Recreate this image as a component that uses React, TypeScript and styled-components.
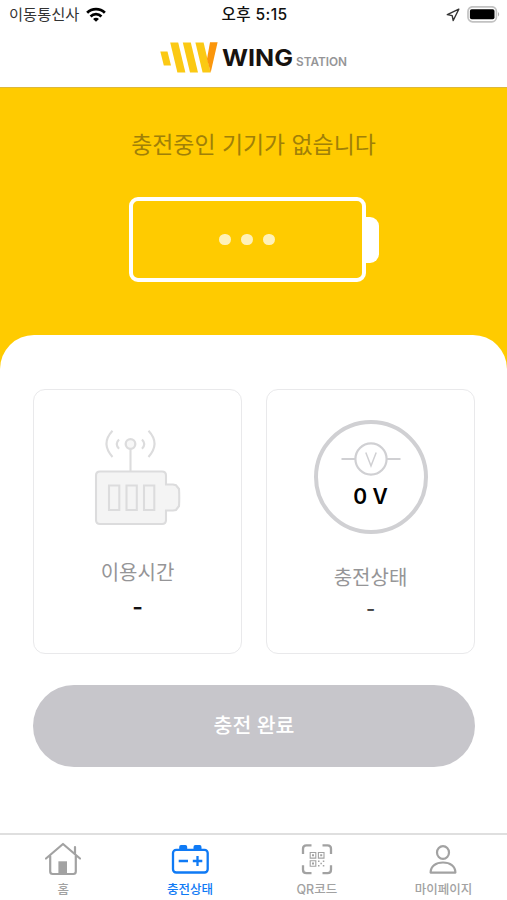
import React from "react";
import styled, { createGlobalStyle } from "styled-components";

const GlobalStyle = createGlobalStyle`
  * { box-sizing: border-box; }
  body {
    margin: 0;
    background: #fff;
    font-family: Inter, "Noto Sans CJK KR", sans-serif;
  }
  svg { display: block; flex: none; }
`;

const Screen = styled.div`
  width: 507px;
  height: 900px;
  display: flex;
  flex-direction: column;
  overflow: hidden;
  background: #fff;
`;

const StatusBar = styled.div`
  height: 30px;
  flex: none;
  display: grid;
  grid-template-columns: 1fr auto 1fr;
  align-items: center;
  padding: 0 7px 0 9px;
  font-size: 15.3px;
  line-height: 30px;
  color: #333;
`;

const Carrier = styled.div`
  display: flex;
  align-items: center;
  gap: 6.5px;
  font-weight: 400;
`;

const Clock = styled.div`
  font-size: 15.6px;
  letter-spacing: 0.4px;
  font-weight: 500;
  color: #111;
`;

const Indicators = styled.div`
  display: flex;
  align-items: center;
  justify-content: flex-end;
  gap: 7px;
`;

const Header = styled.header`
  height: 58px;
  flex: none;
  display: flex;
  align-items: flex-start;
  padding: 12px 0 0 160px;
  border-bottom: 1px solid #dcb83c;
`;

const BrandName = styled.span`
  width: 70px;
  margin: 3px 0 0 4px;
  font-size: 23px;
  line-height: 26px;
  font-weight: 700;
  color: #17120f;
  transform: scaleX(1.09);
  transform-origin: left;
`;

const BrandSuffix = styled.span`
  margin: 12px 0 0 4px;
  font-size: 11.8px;
  line-height: 16px;
  font-weight: 600;
  color: #959597;
`;

const Hero = styled.section`
  height: 283px;
  flex: none;
  display: flex;
  flex-direction: column;
  align-items: center;
  background: #ffcb00;
`;

const HeroTitle = styled.h1`
  margin: 40px 0 0;
  font-size: 22.9px;
  line-height: 34px;
  font-weight: 400;
  color: #a08008;
`;

const BatteryRow = styled.div`
  display: flex;
  align-items: center;
  margin-top: 35px;
`;

const BatteryBody = styled.div`
  width: 237px;
  height: 85px;
  display: flex;
  align-items: center;
  justify-content: center;
  gap: 10.5px;
  border: 4px solid #fff;
  border-radius: 9px;
`;

const BatteryTip = styled.div`
  width: 13px;
  height: 46px;
  border-radius: 0 9px 9px 0;
  background: #fff;
`;

const Dot = styled.i`
  width: 11.5px;
  height: 11.5px;
  border-radius: 50%;
  background: #fff1b8;
`;

const Sheet = styled.main`
  flex: 1;
  margin-top: -36px;
  padding: 54px 32px 0 33px;
  border-radius: 34px 34px 0 0;
  background: #fff;
`;

const Cards = styled.div`
  display: grid;
  grid-template-columns: 1fr 1fr;
  column-gap: 24px;
`;

const Card = styled.article<{ $top: number }>`
  height: 265px;
  display: flex;
  flex-direction: column;
  align-items: center;
  padding-top: ${(p) => p.$top}px;
  border: 1.5px solid #e9e9eb;
  border-radius: 12px;
`;

const CardLabel = styled.div<{ $gap: number }>`
  margin-top: ${(p) => p.$gap}px;
  font-size: 20px;
  line-height: 28px;
  font-weight: 400;
  color: #959597;
`;

const CardValue = styled.div<{ $strong?: boolean }>`
  margin-top: ${(p) => (p.$strong ? 6 : 3)}px;
  font-size: ${(p) => (p.$strong ? 23 : 20)}px;
  line-height: 28px;
  font-weight: ${(p) => (p.$strong ? 600 : 500)};
  color: ${(p) => (p.$strong ? "#111" : "#444")};
`;

const Gauge = styled.div`
  width: 114px;
  height: 114px;
  display: flex;
  flex-direction: column;
  align-items: center;
  padding-top: 18px;
  border: 4px solid #d0d0d3;
  border-radius: 50%;
`;

const Voltage = styled.div`
  margin-top: 7px;
  font-size: 21px;
  line-height: 28px;
  font-weight: 600;
  color: #000;
`;

const CompleteButton = styled.button`
  display: block;
  width: 100%;
  height: 82px;
  margin-top: 31px;
  padding: 0;
  border: 0;
  border-radius: 41px;
  background: #c7c6cb;
  color: #fff;
  font: 500 20.5px/82px Inter, "Noto Sans CJK KR", sans-serif;
`;

const TabBar = styled.nav`
  height: 67px;
  flex: none;
  display: grid;
  grid-template-columns: repeat(4, 1fr);
  border-top: 2px solid #dfdfdf;
`;

const Tab = styled.a<{ $active?: boolean }>`
  display: flex;
  flex-direction: column;
  align-items: center;
  padding-top: 6px;
  gap: 4px;
  font-size: 12.5px;
  line-height: 18px;
  font-weight: 500;
  color: ${(p) => (p.$active ? "#0f7af5" : "#a2a2a2")};
`;

const WifiIcon = () => (
  <svg width="20" height="16" viewBox="0 0 21 16" fill="none" stroke="#000" strokeWidth="2.9">
    <path d="M1.2 5.7C6.3.7 14.7.7 19.8 5.7" />
    <path d="M4.8 9.5C8 6.4 13 6.4 16.2 9.5" />
    <path d="M10.5 15.2 7.4 12.1C9.2 10.6 11.8 10.6 13.6 12.1Z" fill="#000" stroke="none" />
  </svg>
);

const LocationIcon = () => (
  <svg width="14" height="14" viewBox="0 0 14 14" fill="none" stroke="#333" strokeWidth="1.4" strokeLinejoin="round">
    <path d="M12.8 1.2 1.3 6.6 6.2 7.6 7.2 12.5Z" />
  </svg>
);

const PhoneBatteryIcon = () => (
  <svg width="33" height="18" viewBox="0 0 33 18">
    <rect x="1" y=".8" width="28.4" height="15" rx="4.6" fill="#fff" stroke="#c2c2c2" strokeWidth="1.7" />
    <rect x="2.9" y="3.3" width="24.6" height="10" rx="1.8" fill="#000" />
    <path d="M31 6.1C32.6 6.9 32.6 9.7 31 10.5Z" fill="#b0b0b0" />
  </svg>
);

const LogoMark = () => (
  <svg width="58" height="31" viewBox="0 0 58 31" strokeLinejoin="round">
    <g fill="#fbc914">
      <path d="M.3 9.4H7.5L11 23.4H3.8Z" />
      <path d="M10.2.5H18.2L25.4 30.6H17.4Z" />
      <path d="M22.8.5H30.8L38 30.6H30Z" />
      <path d="M35.4.5H43.6L50.6 30.6H42.6Z" />
    </g>
    <path d="M50 .3H57.6L50.7 30.4 47 17Z" fill="#fb960c" />
  </svg>
);

const WirelessBatteryIcon = () => (
  <svg width="88" height="96" viewBox="0 0 88 96" fill="none" stroke="#dcdcdd" strokeWidth="2.1">
    <path d="M6 41.5H68Q72 41.5 72 45.5V54.5H79L82 55.3 85 59Q85.5 67.5 85 76L82 80 79 80.5H72V90Q72 94 68 94H6Q2 94 2 90V45.5Q2 41.5 6 41.5Z" fill="#f4f4f4" />
    <path d="M36.5 18.8V41.5" />
    <circle cx="36.5" cy="14" r="4.8" fill="#f7f7f7" strokeWidth="2.3" />
    <path d="M18.5.8Q6.5 13.5 18.5 27M54.5.8Q66.5 13.5 54.5 27" />
    <path d="M25 9.5Q20.5 14 25 18.7M48 9.5Q52.5 14 48 18.7" />
    <path d="M15 55.5H25.3V80H15ZM32.5 55.5H42.8V80H32.5ZM50 55.5H60.3V80H50Z" />
  </svg>
);

const VoltmeterIcon = () => (
  <svg width="60" height="34" viewBox="0 0 60 34" fill="none" stroke="#d0d0d3" strokeWidth="2.2">
    <circle cx="30" cy="17" r="15.6" />
    <path d="M.5 17H14.3M45.7 17H59.5" />
    <path d="M24.8 10.5 30 24 35.2 10.5" strokeWidth="1.5" />
  </svg>
);

const HomeIcon = () => (
  <svg width="36" height="36" viewBox="1 0 36 36" fill="none" stroke="currentColor" strokeWidth="2.2" strokeLinecap="round" strokeLinejoin="round">
    <path d="M2 17.5 19 3 36 17.5M6.2 15V30.5Q6.2 33 8.7 33H29.3Q31.8 33 31.8 30.5V15M31 12.5V6" />
    <path d="M14.4 32.5V20.3H23V32.5Z" fill="currentColor" stroke="none" />
  </svg>
);

const CarBatteryIcon = () => (
  <svg width="38" height="36" viewBox="0 0 38 36" fill="none" stroke="currentColor" strokeWidth="2.3">
    <rect x="2" y="8.8" width="34.7" height="22.7" rx="3.2" />
    <path d="M8.2 9V6Q8.2 4.1 10 4.1H14.4Q16.2 4.1 16.2 6V9ZM22.5 9V6Q22.5 4.1 24.3 4.1H28.7Q30.5 4.1 30.5 6V9Z" fill="currentColor" stroke="none" />
    <path d="M7.7 20H17M21.8 20H31.3M26.5 15V25" />
  </svg>
);

const QrIcon = () => (
  <svg width="32" height="36" viewBox="0 0 32 36" fill="none" stroke="currentColor">
    <path d="M2 13V7.8Q2 4.3 5.5 4.3H10.5M21.5 4.3H26.5Q30 4.3 30 7.8V13M30 24.2V28.7Q30 32.2 26.5 32.2H21.5M10.5 32.2H5.5Q2 32.2 2 28.7V24.2" strokeWidth="2.3" />
    <path d="M9.2 11.5H14.8V17.1H9.2ZM17.4 11.5H23V17.1H17.4ZM9.2 19.7H14.8V25.3H9.2Z" strokeWidth="1.1" />
    <path d="M11 13.3H13V15.3H11ZM19.2 13.3H21.2V15.3H19.2ZM11 21.5H13V23.5H11ZM17 19.5H18.5V21H17ZM21.8 19.5H23.3V21H21.8ZM19.4 21.7H20.9V23.2H19.4ZM17 24.1H18.5V25.6H17ZM21.8 24.1H23.3V25.6H21.8Z" fill="currentColor" stroke="none" />
  </svg>
);

const PersonIcon = () => (
  <svg width="30" height="36" viewBox="1 0 30 36" fill="none" stroke="currentColor" strokeWidth="2.2" strokeLinejoin="round">
    <ellipse cx="15" cy="11.5" rx="6" ry="6.4" />
    <path d="M2.6 31.6C2.6 25 8 21.5 15 21.5S27.4 25 27.4 31.6Z" />
  </svg>
);

const tabs = [
  { label: "홈", Icon: HomeIcon },
  { label: "충전상태", Icon: CarBatteryIcon, active: true },
  { label: "QR코드", Icon: QrIcon },
  { label: "마이페이지", Icon: PersonIcon },
];

export default function App() {
  return (
    <Screen>
      <GlobalStyle />
      <StatusBar>
        <Carrier>이동통신사<WifiIcon /></Carrier>
        <Clock>오후 5:15</Clock>
        <Indicators><LocationIcon /><PhoneBatteryIcon /></Indicators>
      </StatusBar>
      <Header>
        <LogoMark />
        <BrandName>WING</BrandName>
        <BrandSuffix>STATION</BrandSuffix>
      </Header>
      <Hero>
        <HeroTitle>충전중인 기기가 없습니다</HeroTitle>
        <BatteryRow>
          <BatteryBody><Dot /><Dot /><Dot /></BatteryBody>
          <BatteryTip />
        </BatteryRow>
      </Hero>
      <Sheet>
        <Cards>
          <Card $top={40}>
            <WirelessBatteryIcon />
            <CardLabel $gap={33}>이용시간</CardLabel>
            <CardValue $strong>-</CardValue>
          </Card>
          <Card $top={30}>
            <Gauge>
              <VoltmeterIcon />
              <Voltage>0 V</Voltage>
            </Gauge>
            <CardLabel $gap={30}>충전상태</CardLabel>
            <CardValue>-</CardValue>
          </Card>
        </Cards>
        <CompleteButton>충전 완료</CompleteButton>
      </Sheet>
      <TabBar>
        {tabs.map(({ label, Icon, active }) => (
          <Tab key={label} $active={active}>
            <Icon />
            {label}
          </Tab>
        ))}
      </TabBar>
    </Screen>
  );
}
